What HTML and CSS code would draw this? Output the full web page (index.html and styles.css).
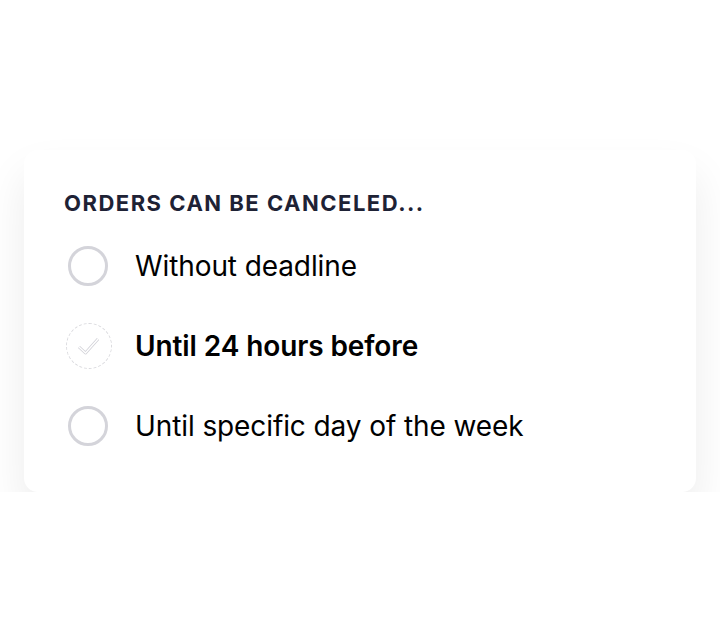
FILE: index.html
```html
<!DOCTYPE html>
<html lang="en">
<head>
  <meta charset="UTF-8" />
  <title>Cancellation policy</title>
  <link rel="stylesheet" href="styles.css">
</head>
<body>

  <div class="card">
    <h2 class="title">Orders can be canceled...</h2>

    <ul class="options">
      <li class="option">
        <span class="radio"></span>
        <span class="label">Without deadline</span>
      </li>
      <li class="option selected">
        <span class="radio">
          <!-- faint outlined check -->
          <svg width="26" height="26" viewBox="0 0 26 26">
            <path d="M3 14 L9.5 20 L22 6" fill="none" stroke="#d2d2d8" stroke-width="3" stroke-linejoin="round" />
            <path d="M3 14 L9.5 20 L22 6" fill="none" stroke="#fff" stroke-width="1.3" stroke-linejoin="round" />
          </svg>
        </span>
        <span class="label">Until 24 hours before</span>
      </li>
      <li class="option">
        <span class="radio"></span>
        <span class="label">Until specific day of the week</span>
      </li>
    </ul>
  </div>

</body>
</html>
```

FILE: styles.css
```css
body {
  margin: 0;
  background: #fff;
  font-family: Inter, "Noto Sans", sans-serif;
  color: #000;
  padding: 150px 24px 0;
}
.card {
  background: #fff;
  border-radius: 14px;
  padding: 40px 40px 26px;
  box-shadow: 0 24px 44px rgba(0, 0, 0, 0.08);
}
.title {
  margin: 0 0 10px;
  font-size: 22px;
  font-weight: 700;
  letter-spacing: 1.5px;
  text-transform: uppercase;
  color: #1e2235;
  line-height: 26px;
}
.options {
  list-style: none;
  margin: 0;
  padding: 0;
}
.option {
  display: flex;
  align-items: center;
  height: 80px;
}
.radio {
  width: 34px;
  height: 34px;
  margin-left: 4px;
  border: 3px solid #d4d4da;
  border-radius: 50%;
  display: flex;
  align-items: center;
  justify-content: center;
  flex-shrink: 0;
}
.selected .radio {
  border: 1px dashed #dadade;
  width: 44px;
  height: 44px;
  margin-left: 2px;
  margin-right: -4px;
}
.label {
  margin-left: 27px;
  font-size: 28px;
  letter-spacing: -0.1px;
}
.selected .label {
  font-weight: 600;
}
```
